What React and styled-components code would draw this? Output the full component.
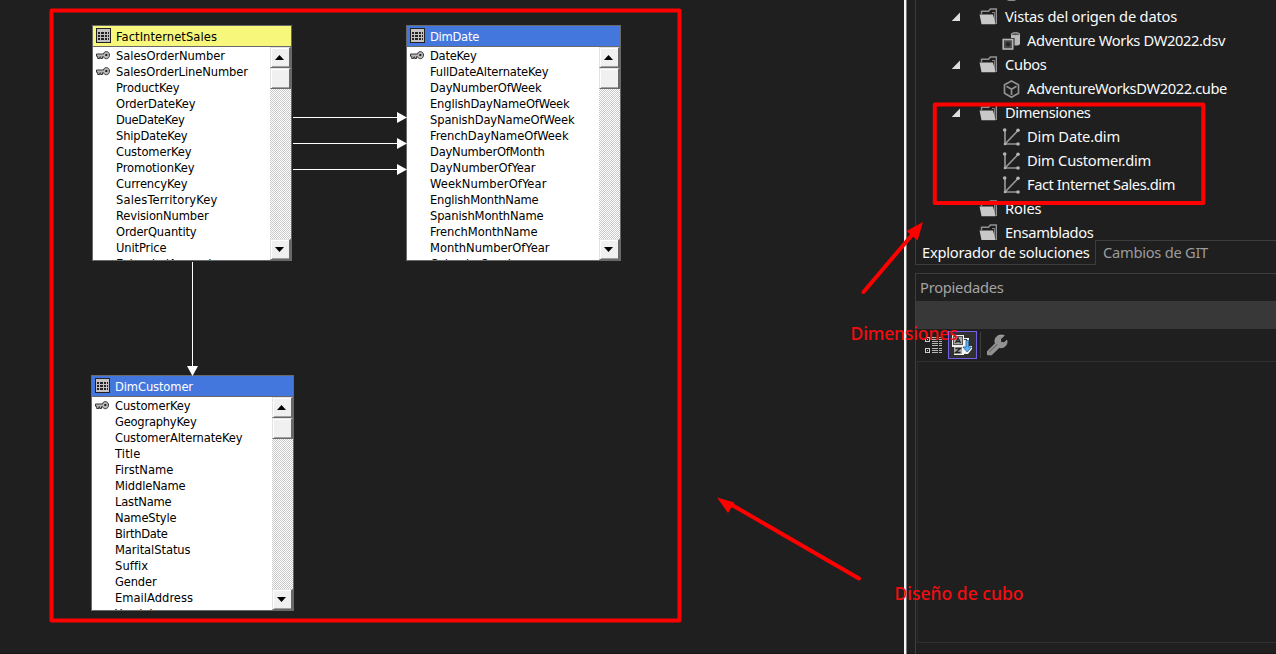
import React, { useLayoutEffect, useRef, useState } from "react";
import styled, { createGlobalStyle } from "styled-components";

const GlobalStyle = createGlobalStyle`
  * { box-sizing: border-box; }
  body { margin: 0; background: #1f1f1f; overflow: hidden; }
`;

const uiFont = `"Segoe UI", "Noto Sans", "Open Sans", sans-serif`;
const listFont = `Tahoma, "DejaVu Sans Condensed", "DejaVu Sans", sans-serif`;

const Window = styled.div`
  position: relative;
  display: flex;
  width: 1276px;
  height: 654px;
  overflow: hidden;
  background: linear-gradient(#161616, #161616) 0 653px / 100% 1px no-repeat #1f1f1f;
  font-family: ${uiFont};
`;

const Canvas = styled.main`
  position: relative;
  flex: 0 0 904px;
`;

const Divider = styled.div`
  flex: 0 0 3px;
  background: #f5f5f5;
  border-right: 1px solid #777;
`;

const Sidebar = styled.aside`
  flex: 1;
  min-width: 0;
  display: flex;
  flex-direction: column;
  padding-left: 8px;
`;

/* Text tracked so that its advance equals a given width */
const Tracked = styled.span`
  display: inline-block;
  white-space: pre;
`;

function Fit({ width, children }) {
  const ref = useRef(null);
  const [spacing, setSpacing] = useState(0);
  useLayoutEffect(() => {
    const natural = ref.current.getBoundingClientRect().width;
    setSpacing((width - natural) / children.length);
  }, []);
  return (
    <Tracked ref={ref} style={{ letterSpacing: `${spacing}px` }}>
      {children}
    </Tracked>
  );
}

/* ---------- Diagram tables ---------- */

const Entity = styled.section`
  position: absolute;
  left: ${(p) => p.$x}px;
  top: ${(p) => p.$y}px;
  width: ${(p) => p.$w}px;
  height: 236px;
  display: flex;
  flex-direction: column;
  border: 1px solid #696969;
  background: #fff;
  font-family: ${listFont};
  font-size: 12.8px;
`;

const EntityHeader = styled.header`
  flex: 0 0 21px;
  height: 21px;
  min-height: 0;
  display: flex;
  align-items: center;
  gap: 5px;
  padding-left: 3px;
  border-bottom: 1px solid #696969;
  background: ${(p) => (p.$fact ? "#f7f77b" : "#4477dd")};
  color: ${(p) => (p.$fact ? "#000" : "#fff")};
  line-height: 18px;
  svg { margin-bottom: 2px; }
  span { margin-top: 2px; }
`;

const EntityBody = styled.div`
  flex: 1;
  min-height: 0;
  display: flex;
`;

const FieldList = styled.div`
  flex: 1;
  min-width: 0;
  padding-top: 1px;
  overflow: hidden;
`;

const Field = styled.div`
  display: flex;
  height: 16px;
  align-items: center;
  line-height: 16px;
  color: #000;
`;

const KeySlot = styled.span`
  flex: 0 0 23px;
  padding-left: 3px;
  display: flex;
`;

const Scrollbar = styled.div`
  flex: 0 0 21px;
  display: flex;
  flex-direction: column;
  background: repeating-conic-gradient(#c9c9c9 0 25%, #fff 0 50%) 0 0 / 2px 2px;
`;

const ScrollButton = styled.div`
  flex: 0 0 21px;
  display: flex;
  align-items: center;
  justify-content: center;
  padding-right: 1px;
  background: #f0f0f0;
  border-style: solid;
  border-width: 1px 2px 1px 1px;
  border-color: #e3e3e3 #696969 #696969 #e3e3e3;
  box-shadow: inset 1px 1px #fff, inset 0 -1px #a0a0a0;
`;

const Track = styled.div`
  flex: 1;
`;

const TableIcon = () => (
  <svg width="15" height="15" viewBox="0 0 15 15" shapeRendering="crispEdges">
    <rect width="15" height="15" fill="#222" />
    <rect x="1" y="1" width="13" height="13" fill="#c6c2c4" />
    {[4, 7, 10].map((y) =>
      [[2, 2], [5, 3], [9, 2], [12, 1]].map(([x, w]) => (
        <rect key={`${x}-${y}`} x={x} y={y} width={w} height="2" fill="#222" />
      ))
    )}
  </svg>
);

const KeyIcon = () => (
  <svg width="14" height="10" viewBox="0 0 14 10">
    <path d="M.5 3h7C7.900 1.400 8.800.6 10.300.6c2 0 3.200 1.500 3.200 3.500s-1.200 3.600-3.200 3.600c-1.500 0-2.400-.8-2.900-2.100H6.500v1.900H4.700V5.900H3.800v1.600H1.700V5.300H.5z" fill="#b8b8b8" stroke="#333" strokeWidth="1" />
    <rect x="9.300" y="3" width="2" height="2" fill="#222" />
  </svg>
);

const Arrow = ({ down }) => (
  <svg width="9" height="5" viewBox="0 0 9 5">
    <path d={down ? "M0 0h9L4.500 5z" : "M0 5h9L4.500 0z"} fill="#000" />
  </svg>
);

function EntityTable({ x, y, w, title, titleWidth, fact, keys, fields }) {
  return (
    <Entity $x={x} $y={y} $w={w}>
      <EntityHeader $fact={fact}>
        <TableIcon />
        <Fit width={titleWidth}>{title}</Fit>
      </EntityHeader>
      <EntityBody>
        <FieldList>
          {fields.map(([name, width], i) => (
            <Field key={name}>
              <KeySlot>{i < keys && <KeyIcon />}</KeySlot>
              <Fit width={width - 0.5}>{name}</Fit>
            </Field>
          ))}
        </FieldList>
        <Scrollbar>
          <ScrollButton><Arrow /></ScrollButton>
          <ScrollButton />
          <Track />
          <ScrollButton><Arrow down /></ScrollButton>
        </Scrollbar>
      </EntityBody>
    </Entity>
  );
}

const entities = [
  {
    x: 92, y: 25, w: 200, title: "FactInternetSales", titleWidth: 101, fact: true, keys: 2,
    fields: [
      ["SalesOrderNumber", 109.5], ["SalesOrderLineNumber", 132.5], ["ProductKey", 64],
      ["OrderDateKey", 80], ["DueDateKey", 69], ["ShipDateKey", 72], ["CustomerKey", 76],
      ["PromotionKey", 79], ["CurrencyKey", 72], ["SalesTerritoryKey", 102],
      ["RevisionNumber", 93], ["OrderQuantity", 81], ["UnitPrice", 51], ["ExtendedAmount", 97],
    ],
  },
  {
    x: 406, y: 25, w: 215, title: "DimDate", titleWidth: 49, keys: 1,
    fields: [
      ["DateKey", 47], ["FullDateAlternateKey", 119], ["DayNumberOfWeek", 112],
      ["EnglishDayNameOfWeek", 140], ["SpanishDayNameOfWeek", 145], ["FrenchDayNameOfWeek", 139],
      ["DayNumberOfMonth", 115], ["DayNumberOfYear", 106], ["WeekNumberOfYear", 117],
      ["EnglishMonthName", 109], ["SpanishMonthName", 114], ["FrenchMonthName", 108],
      ["MonthNumberOfYear", 120], ["CalendarQuarter", 94],
    ],
  },
  {
    x: 91, y: 375, w: 203, title: "DimCustomer", titleWidth: 78, keys: 1,
    fields: [
      ["CustomerKey", 76], ["GeographyKey", 82], ["CustomerAlternateKey", 128], ["Title", 26],
      ["FirstName", 59], ["MiddleName", 71], ["LastName", 57], ["NameStyle", 62],
      ["BirthDate", 53], ["MaritalStatus", 76], ["Suffix", 33.5], ["Gender", 42],
      ["EmailAddress", 78.5], ["YearlyIncome", 77],
    ],
  },
];

const Relations = styled.svg`
  position: absolute;
  left: 0;
  top: 0;
`;

/* ---------- Solution explorer ---------- */

const Tree = styled.div`
  height: 240px;
  overflow: hidden;
  display: flex;
  flex-direction: column;
  justify-content: flex-end;
  border-left: 1px solid #3a3a3a;
`;

const TreeRows = styled.div`
  flex: none;
  margin-bottom: -4px;
`;

const TreeRow = styled.div`
  display: flex;
  align-items: center;
  height: 24px;
  padding-left: ${(p) => (p.$child ? 86 : 35)}px;
  color: #fafafa;
  font-size: 14.7px;
  line-height: 24px;
`;

const Expander = styled.span`
  flex: 0 0 28px;
  display: flex;
  padding-top: 1px;
`;

const IconSlot = styled.span`
  flex: 0 0 ${(p) => (p.$child ? 25 : 26)}px;
  display: flex;
  padding-top: 2px;
`;

const FolderIcon = () => (
  <svg width="19" height="18" viewBox="0 0 19 18">
    <path d="M2.500 6V3.300h7l1.800-2.300h6v15" fill="none" stroke="#929292" strokeWidth="1.400" />
    <path d="M13 4.500h2.500v10" fill="none" stroke="#858585" strokeWidth="1" />
    <path d="M.6 6.400h13.400l2.600 9.900H2.500z" fill="#c8c8c8" />
  </svg>
);

const ViewIcon = () => (
  <svg width="19" height="18" viewBox="0 0 19 18">
    <path d="M9 2.500v9.800c2 1.700 7 1.700 9 0V2.500z" fill="#b9b9b9" />
    <ellipse cx="13.500" cy="2.200" rx="4.200" ry="1.500" fill="#555" stroke="#bdbdbd" />
    <rect x="0" y="6" width="12.500" height="12" fill="#1f1f1f" />
    <rect x="1.200" y="7.500" width="9.500" height="9.500" fill="#4a4a4a" stroke="#b5b5b5" strokeWidth="1.600" />
    <circle cx="6" cy="12.200" r="2.300" fill="#252525" />
  </svg>
);

const CubeIcon = () => (
  <svg width="19" height="18" viewBox="0 0 19 18">
    <path d="M9.500 1 16.500 4.800v8.500L9.500 17.300 2.500 13.300V4.800zM4.500 6.200l5 3 5-3M9.500 9.200V15" fill="none" stroke="#919191" strokeWidth="1.700" />
  </svg>
);

const DimensionIcon = () => (
  <svg width="19" height="18" viewBox="0 0 19 18">
    <path d="M3 2v14h13M3 16 16 2.500" fill="none" stroke="#959595" strokeWidth="1.700" />
    <g fill="#b5b5b5">
      <circle cx="2.700" cy="2" r="1.800" />
      <circle cx="16" cy="2.300" r="1.800" />
      <circle cx="16" cy="16" r="1.800" />
      <circle cx="3" cy="16" r="1.300" />
    </g>
  </svg>
);

const SourceIcon = () => (
  <svg width="19" height="18" viewBox="0 0 19 18">
    <path d="M2 1v13c2 3.800 13 3.800 15 0V1z" fill="#b5b5b5" />
  </svg>
);

const icons = { folder: FolderIcon, view: ViewIcon, cube: CubeIcon, dim: DimensionIcon, source: SourceIcon };

const nodes = [
  { icon: "source", child: true },
  { icon: "folder", open: true, label: "Vistas del origen de datos", width: 172 },
  { icon: "view", child: true, label: "Adventure Works DW2022.dsv", width: 198 },
  { icon: "folder", open: true, label: "Cubos", width: 41.5 },
  { icon: "cube", child: true, label: "AdventureWorksDW2022.cube", width: 200 },
  { icon: "folder", open: true, label: "Dimensiones", width: 85.5 },
  { icon: "dim", child: true, label: "Dim Date.dim", width: 93 },
  { icon: "dim", child: true, label: "Dim Customer.dim", width: 124 },
  { icon: "dim", child: true, label: "Fact Internet Sales.dim", width: 148 },
  { icon: "folder", label: "Roles", width: 36.5 },
  { icon: "folder", label: "Ensamblados", width: 88.5 },
];

function TreeNode({ icon, child, open, label, width }) {
  const Icon = icons[icon];
  return (
    <TreeRow $child={child}>
      {!child && (
        <Expander>
          {open && (
            <svg width="18" height="10" viewBox="0 0 18 10">
              <path d="M9 .5v8.500H.7z" fill="#dedede" />
            </svg>
          )}
        </Expander>
      )}
      <IconSlot $child={child}><Icon /></IconSlot>
      {label && <Fit width={width}>{label}</Fit>}
    </TreeRow>
  );
}

const Tabs = styled.nav`
  flex: 0 0 25px;
  display: flex;
  font-size: 14.700px;
`;

const Tab = styled.div`
  flex: ${(p) => (p.$active ? "0 0 181px" : "1")};
  padding-left: ${(p) => (p.$active ? 6 : 7)}px;
  line-height: ${(p) => (p.$active ? 24 : 22)}px;
  color: ${(p) => (p.$active ? "#fafafa" : "#9c9c9c")};
  border: 0 solid #3d3d3d;
  border-width: ${(p) => (p.$active ? "0 1px 1px 1px" : "1px 0 0 0")};
`;

/* ---------- Properties ---------- */

const Properties = styled.section`
  flex: 1;
  margin-top: 8px;
  display: flex;
  flex-direction: column;
  border: 1px solid #3d3d3d;
  border-width: 1px 0 0 1px;
`;

const PanelTitle = styled.h2`
  flex: 0 0 27px;
  margin: 0;
  padding-left: 4px;
  font-size: 14.7px;
  font-weight: 400;
  line-height: 27px;
  color: #a3a3a3;
`;

const ObjectPicker = styled.div`
  flex: 0 0 28px;
  background: #383838;
`;

const Toolbar = styled.div`
  flex: 0 0 32px;
  display: flex;
  align-items: flex-start;
  padding: 2px 0 0 3px;
`;

const ToolButton = styled.span`
  width: ${(p) => p.$w}px;
  height: 28px;
  display: flex;
  align-items: center;
  justify-content: center;
  border: 1px solid ${(p) => (p.$active ? "#7160e8" : "transparent")};
  background: ${(p) => (p.$active ? "#303030" : "transparent")};
`;

const Separator = styled.span`
  width: 1px;
  height: 26px;
  margin: 1px 2px 0 3px;
  background: #3d3d3d;
`;

const Grid = styled.div`
  flex: 0 0 282px;
  margin-left: 1px;
  border: solid #303030;
  border-width: 1px 0 1px 0;
  box-shadow: inset 1px 0 #2a2a2a;
`;

const CategoryIcon = () => (
  <svg width="18" height="18" viewBox="0 0 18 18" shapeRendering="crispEdges">
    <g fill="none" stroke="#ccc">
      <rect x=".5" y="1.500" width="4" height="4" />
      <rect x=".5" y="12.500" width="4" height="4" />
    </g>
    <path d="M2 3h1v1H2zM2 14h1v1H2z" fill="#ccc" />
    <path d="M7 1.500h6M14 1.500h3M7 3.500h6M14 3.500h3M7 5.500h6M14 5.500h3M7 7.500h6M14 7.500h3M7 9.500h6M14 9.500h3M7 12.500h6M14 12.500h3M7 14.500h6M14 14.500h3M7 16.500h6M14 16.500h3" stroke="#b5b5b5" />
  </svg>
);

const SortIcon = () => (
  <svg width="21" height="22" viewBox="0 0 21 22">
    <path d="M0 1h12v3h5v8h3v3l-4 5h-4v1H2v-8H0z" fill="#f2f2f2" />
    <rect x="1.500" y="2.500" width="9" height="8" fill="#aaa" stroke="#555" />
    <path d="m3.500 9 2.500-5 2.500 5M4.500 7.500h3" fill="none" stroke="#222" strokeWidth="1.300" />
    <rect x="2" y="13" width="8" height="7" fill="#aaa" />
    <path d="M3.500 14.500h5l-5 4h5" fill="none" stroke="#222" strokeWidth="1.300" />
    <path d="M12 5.500h3" fill="none" stroke="#333" />
    <path d="M14 6.500h2.500V13h3l-4.300 5-4.200-5h3z" fill="#55b4ff" stroke="#174c78" strokeWidth=".7" />
  </svg>
);

const WrenchIcon = () => (
  <svg width="22" height="22" viewBox="0 0 22 22">
    <path d="m1.500 17.200 7.800-7.700C8.600 6.700 9 4.500 10.700 2.800 12.500 1 15 .7 18.300 1.500L14.500 5v2.200l1.500 1.500h2.200l2.600-2.500c.5 2.200 0 4.300-1.600 5.900-1.700 1.600-3.800 1.900-6 1.400l-7.600 7.300H1.500z" fill="#929292" stroke="#aaa" strokeWidth=".8" />
    <path d="m3.200 18 8-7.800" stroke="#6f6f6f" strokeWidth="1.200" />
  </svg>
);

/* ---------- Annotations ---------- */

const Markup = styled.svg`
  position: absolute;
  left: 0;
  top: 0;
  pointer-events: none;
`;

const Note = styled.div`
  position: absolute;
  left: ${(p) => p.$x}px;
  top: ${(p) => p.$y}px;
  color: #f40d10;
  font-size: 17.500px;
  font-weight: 500;
  line-height: 24px;
`;

export default function App() {
  return (
    <Window>
      <GlobalStyle />
      <Canvas>
        {entities.map((e) => <EntityTable key={e.title} {...e} />)}
        <Relations width="904" height="653">
          <g stroke="#fff" fill="#fff">
            {[117.5, 143.5, 169.5].map((y) => (
              <g key={y}>
                <path d={`M293 ${y}H398`} />
                <path d={`M397 ${y - 5.5}L407 ${y}L397 ${y + 5.5}z`} stroke="none" />
              </g>
            ))}
            <path d="M192.500 262V367" />
            <path d="M187 366h11L192.500 376z" stroke="none" />
          </g>
        </Relations>
      </Canvas>
      <Divider />
      <Sidebar>
        <Tree>
          <TreeRows>
            {nodes.map((n, i) => <TreeNode key={i} {...n} />)}
          </TreeRows>
        </Tree>
        <Tabs>
          <Tab $active><Fit width={167.5}>Explorador de soluciones</Fit></Tab>
          <Tab><Fit width={105}>Cambios de GIT</Fit></Tab>
        </Tabs>
        <Properties>
          <PanelTitle><Fit width={83.5}>Propiedades</Fit></PanelTitle>
          <ObjectPicker />
          <Toolbar>
            <ToolButton $w={29}><CategoryIcon /></ToolButton>
            <ToolButton $w={29} $active><SortIcon /></ToolButton>
            <Separator />
            <ToolButton $w={27}><WrenchIcon /></ToolButton>
          </Toolbar>
          <Grid />
        </Properties>
      </Sidebar>
      <Markup width="1276" height="654">
        <g fill="none" stroke="#f00" strokeWidth="4" strokeLinejoin="round">
          <rect x="51.500" y="10.500" width="628" height="610" />
          <rect x="934.800" y="104.500" width="268.500" height="98.500" />
          <path d="M863.500 292 912 235M859 578.500 732 505" strokeLinecap="round" />
        </g>
        <path d="M923 222 917.500 240.500 906.500 231zM717 497.500 734.500 502.500 728 513z" fill="#f00" />
      </Markup>
      <Note $x={850.5} $y={321}><Fit width={107}>Dimensiones</Fit></Note>
      <Note $x={894.5} $y={581}><Fit width={129}>Diseño de cubo</Fit></Note>
    </Window>
  );
}
